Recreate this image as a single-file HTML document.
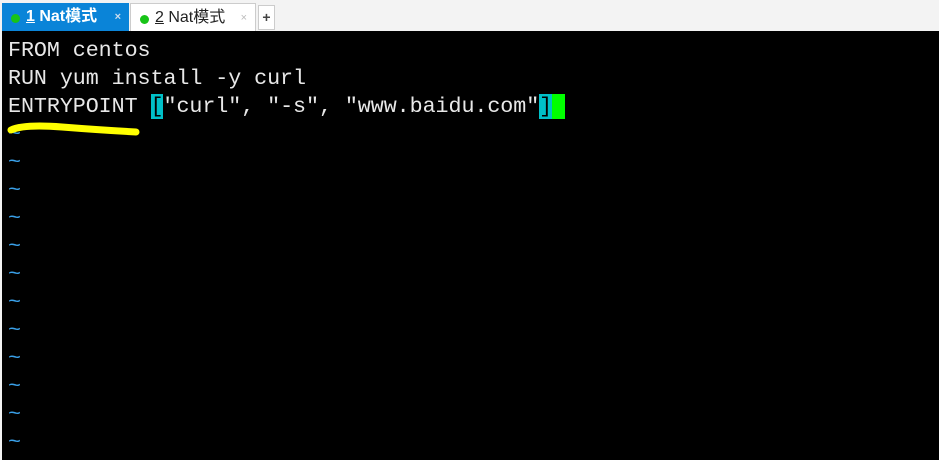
<!DOCTYPE html>
<html><head><style>
body{margin:0;width:939px;height:460px;background:#f3f3f3;position:relative;overflow:hidden;font-family:"Liberation Sans","Noto Sans CJK SC",sans-serif}
.tab{position:absolute;top:3px;height:28px;box-sizing:border-box;font-size:16px;line-height:28px}
.t1{left:2px;width:127px;background:#0a84d8;color:#fff;font-weight:bold}
.t2{left:130px;width:126px;background:#fff;border:1px solid #ccc;border-bottom:none;color:#222}
.dot{position:absolute;left:9px;top:11px;width:9px;height:9px;border-radius:50%;background:#18c418}
.lbl{position:absolute;left:24px;top:0}
.x{position:absolute;right:8px;top:0;font-size:11px;color:#bbb}
.plus{position:absolute;left:258px;top:5px;width:17px;height:25px;background:#fff;border:1px solid #ccc;box-sizing:border-box;text-align:center;font:bold 14px/22px "Liberation Sans",sans-serif;color:#444}
.term{position:absolute;left:2px;top:31px;right:0;bottom:0;background:#000}
pre{margin:0;position:absolute;left:6px;top:6px;font:21.7px/28px "Liberation Mono",monospace;color:#e8e8e8;letter-spacing:-0.06px}
.c{background:#00c0c8;color:#000}
.g{background:#00ff00}
.t{color:#3aa0e8}
</style></head><body>
<div class="tab t1"><span class="dot"></span><span class="lbl"><u>1</u> Nat模式</span><span class="x" style="color:#cde">×</span></div>
<div class="tab t2"><span class="dot"></span><span class="lbl"><u>2</u> Nat模式</span><span class="x">×</span></div>
<div class="plus">+</div>
<div class="term">
<pre>FROM centos
RUN yum install -y curl
ENTRYPOINT <span class="c">[</span>"curl", "-s", "www.baidu.com"<span class="c">]</span><span class="g"> </span>
<span class="t">~
~
~
~
~
~
~
~
~
~
~
~</span></pre>
<svg style="position:absolute;left:0;top:0" width="160" height="120"><path d="M9 99 Q22 93 60 96 T134 101" stroke="#ffff00" stroke-width="7" fill="none" stroke-linecap="round"/></svg>
</div>
</body></html>
